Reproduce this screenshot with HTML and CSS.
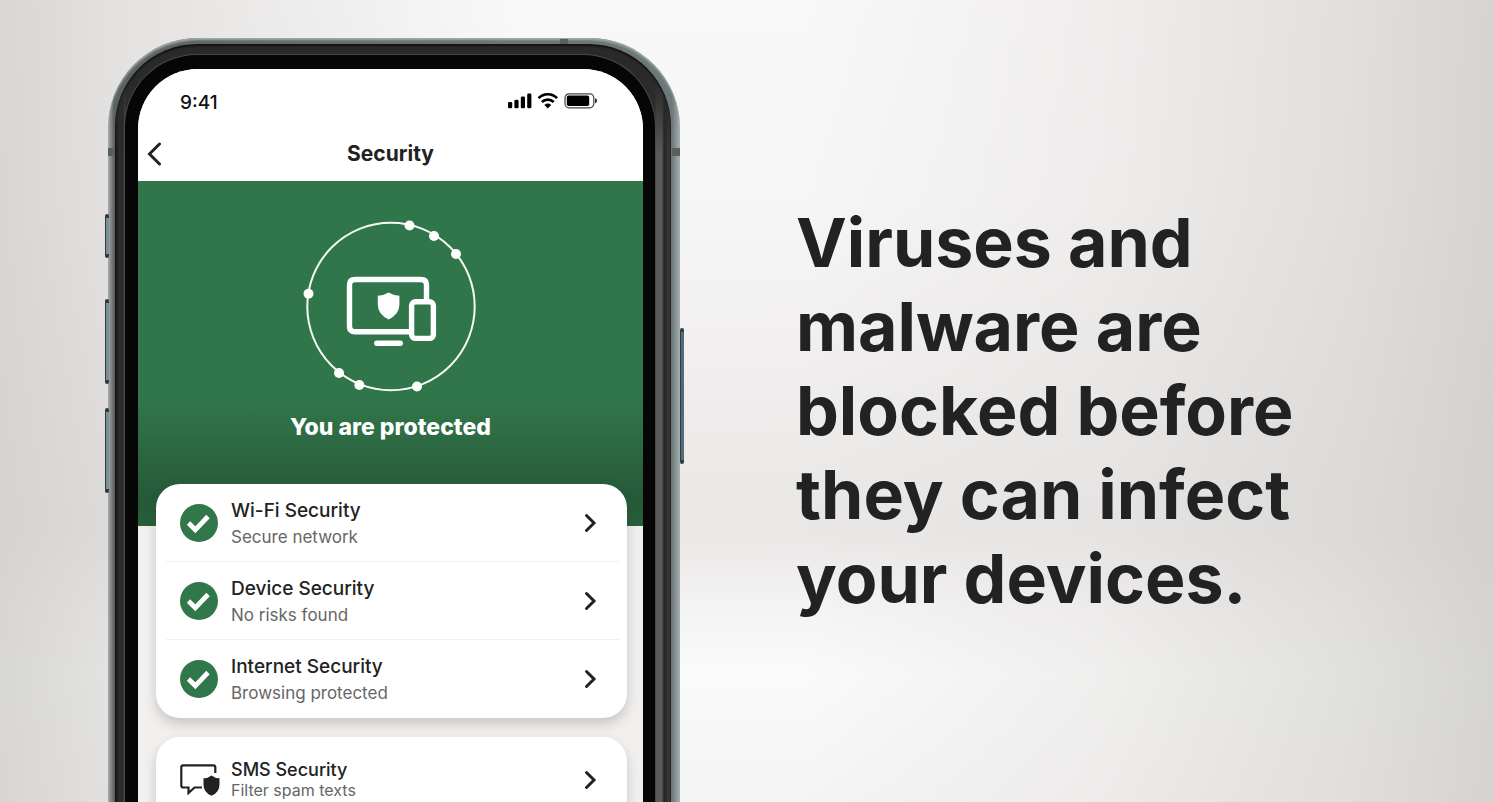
FILE: index.html
```html
<!DOCTYPE html>
<html lang="en">
<head>
<meta charset="utf-8">
<meta name="viewport" content="width=device-width, initial-scale=1">
<title>Security</title>
<link rel="stylesheet" href="styles.css">
</head>
<body>
<main class="stage">
  <div class="phone">
    <span class="key key-mute"></span>
    <span class="key key-up"></span>
    <span class="key key-down"></span>
    <span class="key key-power"></span>
    <span class="band band-left"></span>
    <span class="band band-right"></span>
    <span class="band band-top"></span>
    <div class="rim">
      <div class="bezel">
        <div class="screen">
          <div class="status">
            <span class="time">9:41</span>
            <svg class="status-icons" width="90" height="18" viewBox="0 0 90 18" aria-hidden="true">
              <rect x="0" y="10" width="4.200" height="6.300" rx="1.300"/>
              <rect x="6.400" y="7.700" width="4.200" height="8.600" rx="1.300"/>
              <rect x="12.800" y="4.600" width="4.200" height="11.700" rx="1.300"/>
              <rect x="19.200" y="1.600" width="4.200" height="14.700" rx="1.300"/>
              <g fill="none" stroke="#000" stroke-width="2.600">
                <path d="M30.500 6.200a13 13 0 0 1 18.600 0"/>
                <path d="M33.900 10a8.400 8.400 0 0 1 11.800 0"/>
              </g>
              <path d="M36.400 13a4.800 4.800 0 0 1 6.800 0l-3.400 3.600z"/>
              <rect x="57" y="1.800" width="28.800" height="14" rx="4" fill="none" stroke="#444" stroke-width="1.200"/>
              <rect x="58.800" y="3.600" width="22.400" height="10.400" rx="1.800"/>
              <path d="M87.200 6.300c2.200.5 2.200 4.400 0 5z"/>
            </svg>
          </div>
          <header class="bar">
            <button class="back" type="button" aria-label="Back">
              <svg width="16" height="24" viewBox="0 0 16 24" aria-hidden="true"><path d="M13.500 2 3.500 12l10 10"/></svg>
            </button>
            <h1 class="title">Security</h1>
          </header>
          <section class="hero">
            <svg class="emblem" width="176" height="176" viewBox="0 0 176 176" aria-hidden="true">
              <circle cx="88" cy="87.500" r="83.700" fill="none" stroke="#f2fbf4" stroke-width="2"/>
              <g fill="#fff">
                <circle cx="106.500" cy="6.500" r="5"/><circle cx="131" cy="17" r="5"/><circle cx="153" cy="35" r="5"/>
                <circle cx="5.500" cy="74.800" r="5"/><circle cx="36" cy="154" r="5"/><circle cx="56.300" cy="166" r="5"/><circle cx="114" cy="167.500" r="5"/>
              </g>
              <g fill="none" stroke="#fff" stroke-width="5.400">
                <path d="M108.500 112.700H52q-5.500 0-5.500-5.500V66q0-5.500 5.500-5.500h66q5.500 0 5.500 5.500v17"/>
                <rect x="108.600" y="82.800" width="21.800" height="36.600" rx="4"/>
                <path d="M73.800 124.200h23.400" stroke-linecap="round"/>
              </g>
              <path fill="#fff" d="M85.600 73.500q4.800 3 10.800 3.300v9q0 9.500-10.800 14.700-10.800-5.200-10.800-14.700v-9q6-.3 10.800-3.300z"/>
            </svg>
            <p class="state">You are protected</p>
          </section>
          <div class="lists">
            <ul class="card">
              <li class="row"><a class="link" href="#wifi">
                <svg class="icon" width="38" height="38" viewBox="0 0 38 38" aria-hidden="true"><circle cx="19" cy="19" r="19" fill="#30774a"/><path d="m8.500 19 6.800 6.800L28 12.500" fill="none" stroke="#fff" stroke-width="4.800"/></svg>
                <span class="text"><span class="name">Wi-Fi Security</span><span class="note">Secure network</span></span>
                <svg class="go" width="14" height="20" viewBox="0 0 14 20" aria-hidden="true"><path d="m3.500 2.500 7.500 7.500-7.500 7.500"/></svg>
              </a></li>
              <li class="row"><a class="link" href="#device">
                <svg class="icon" width="38" height="38" viewBox="0 0 38 38" aria-hidden="true"><circle cx="19" cy="19" r="19" fill="#30774a"/><path d="m8.500 19 6.800 6.800L28 12.500" fill="none" stroke="#fff" stroke-width="4.800"/></svg>
                <span class="text"><span class="name">Device Security</span><span class="note">No risks found</span></span>
                <svg class="go" width="14" height="20" viewBox="0 0 14 20" aria-hidden="true"><path d="m3.500 2.500 7.500 7.500-7.500 7.500"/></svg>
              </a></li>
              <li class="row"><a class="link" href="#internet">
                <svg class="icon" width="38" height="38" viewBox="0 0 38 38" aria-hidden="true"><circle cx="19" cy="19" r="19" fill="#30774a"/><path d="m8.500 19 6.800 6.800L28 12.500" fill="none" stroke="#fff" stroke-width="4.800"/></svg>
                <span class="text"><span class="name">Internet Security</span><span class="note">Browsing protected</span></span>
                <svg class="go" width="14" height="20" viewBox="0 0 14 20" aria-hidden="true"><path d="m3.500 2.500 7.500 7.500-7.500 7.500"/></svg>
              </a></li>
            </ul>
            <ul class="card card-more">
              <li class="row"><a class="link" href="#sms">
                <svg class="icon" width="40" height="34" viewBox="0 0 40 34" aria-hidden="true">
                  <path d="M22 24.500h-7.500L8.500 30v-5.500H3.300q-2 0-2-2V4.300q0-2 2-2h30q2 0 2 2V10" fill="none" stroke="#222" stroke-width="2.200"/>
                  <path d="M31.500 12.500q3.500 2.800 8 2.800v6.200q0 8-8 11.300-8-3.300-8-11.300v-6.200q4.500 0 8-2.800z" fill="#222"/>
                </svg>
                <span class="text"><span class="name">SMS Security</span><span class="note">Filter spam texts</span></span>
                <svg class="go" width="14" height="20" viewBox="0 0 14 20" aria-hidden="true"><path d="m3.500 2.500 7.500 7.500-7.500 7.500"/></svg>
              </a></li>
            </ul>
          </div>
        </div>
      </div>
    </div>
  </div>
  <h2 class="headline">Viruses and malware are blocked before they can infect your devices.</h2>
</main>
</body>
</html>
```
FILE: styles.css
```css
* { box-sizing: border-box; }

body {
  margin: 0;
  font-family: Inter, "Liberation Sans", sans-serif;
  color: #222;
}

.stage {
  display: grid;
  grid-template-columns: minmax(0, 572px) minmax(0, 520px);
  gap: 116px;
  height: 100vh;
  padding: 38px 108px 0;
  overflow: hidden;
  background:
    linear-gradient(90deg, rgba(207, 206, 204, 0.8) 0%, rgba(213, 212, 210, 0.6) 8%, rgba(240, 239, 238, 0) 34%, rgba(240, 239, 238, 0) 54%, rgba(224, 222, 220, 0.4) 74%, rgba(212, 211, 209, 0.65) 90%, rgba(204, 203, 201, 0.8) 100%),
    linear-gradient(180deg, #f9f8f8 0%, #f7f6f6 25%, #eae8e7 63%, #eae8e7 67%, #f5f4f4 76%, #fafafa 84%, #f5f4f4 100%);
}

/* Handset */
.phone {
  position: relative;
  display: flex;
  height: 1160px;
  padding: 6px 9px 6px 7px;
  border-radius: 90px;
  background: linear-gradient(90deg, #a9aaa9 0, #5c6261 6px, #687271 50%, #6c7879 564px, #a5b0b0 100%);
  box-shadow: inset 0 2px 2px #a2aaa9;
}

.rim {
  display: flex;
  flex: 1;
  min-width: 0;
  padding: 11px 16px 11px 10px;
  border-radius: 82px;
  background:
    linear-gradient(180deg, #2a2a2a 0, #2a2a2a 40px, rgba(42, 42, 42, 0) 110px),
    linear-gradient(90deg, #151515 0, #303030 5px, #242424 8px, #555 9px, #303030 12px, #303030 540px, #5c5a59 541px, #5c5a59 547px, #252423 549px, #3e3c3a 555px, #161b1c 100%);
  box-shadow: inset 0 2px 2px #111;
}

.bezel {
  display: flex;
  flex: 1;
  min-width: 0;
  padding: 14px 12px 14px 13px;
  border-radius: 72px;
  background: #060606;
  box-shadow: 0 0 0 1px #484847;
}

.screen {
  flex: 1;
  min-width: 0;
  overflow: hidden;
  border-radius: 60px;
  background: #f1f0ee;
}

.key,
.band { position: absolute; }

.key {
  left: -3px;
  width: 4px;
  border: solid #34393b;
  border-width: 4px 0 4px 1px;
  border-radius: 2px;
  background: #78909b;
}

.key-mute { top: 176px; height: 44px; }
.key-up { top: 261px; height: 85px; }
.key-down { top: 370px; height: 85px; }
.key-power { top: 290px; right: -4px; left: auto; height: 136px; background: #526b7b; }

.band { background: #56605c; }
.band-left { top: 110px; left: 0; width: 7px; height: 8px; }
.band-right { top: 110px; right: 0; width: 8px; height: 8px; }
.band-top { top: 1px; right: 112px; width: 8px; height: 5px; }

/* Status and title bars */
.status {
  display: flex;
  align-items: center;
  justify-content: space-between;
  height: 58px;
  padding: 6px 45px 0 42px;
  background: #fff;
}

.time {
  padding-top: 4px;
  font-size: 19px;
  font-weight: 500;
  line-height: 24px;
  color: #111;
}

.bar {
  display: grid;
  grid-template-columns: 40px 1fr 40px;
  align-items: center;
  height: 54px;
  padding: 0 6px;
  background: #fff;
}

.back {
  display: flex;
  padding: 2px;
  border: 0;
  background: none;
}

.back path,
.go path {
  fill: none;
  stroke: #222;
  stroke-width: 3;
  stroke-linecap: round;
}

.title {
  margin: 0;
  font-size: 21px;
  font-weight: 700;
  line-height: 28px;
  text-align: center;
}

/* Protection summary */
.hero {
  display: flex;
  flex-direction: column;
  align-items: center;
  gap: 16px;
  height: 345px;
  padding-top: 38px;
  background: linear-gradient(180deg, #31754a 0%, #31754a 64%, #265a38 92%, #275f3a 100%);
  color: #fff;
}

.state {
  margin: 0;
  font-size: 23px;
  font-weight: 800;
  line-height: 32px;
}

/* Feature cards */
.lists {
  display: grid;
  gap: 19px;
  margin-top: -42px;
  padding: 0 16px 0 18px;
}

.card {
  margin: 0;
  padding: 0 7px 0 10px;
  border-radius: 24px;
  background: #fff;
  box-shadow: 0 6px 12px rgba(60, 50, 60, 0.22);
  list-style: none;
}

.link {
  display: grid;
  grid-template-columns: 40px 1fr 14px;
  align-items: center;
  gap: 11px;
  height: 78px;
  padding: 0 23px 0 14px;
  color: inherit;
  text-decoration: none;
}

.row + .row .link { box-shadow: 0 -1px #f1f1f1; }

.text {
  display: grid;
  padding-top: 2px;
}

.name {
  font-size: 19px;
  font-weight: 500;
  line-height: 26px;
}

.note {
  font-size: 17px;
  line-height: 26px;
  color: #666;
}

.card-more .link { height: 86px; }
.card-more .text { padding-top: 0; }
.card-more .name { font-size: 18px; line-height: 20px; }
.card-more .note { font-size: 16px; line-height: 20px; }

.headline {
  margin: 0;
  padding-top: 162px;
  font-size: 68px;
  font-weight: 700;
  line-height: 84px;
}
```
